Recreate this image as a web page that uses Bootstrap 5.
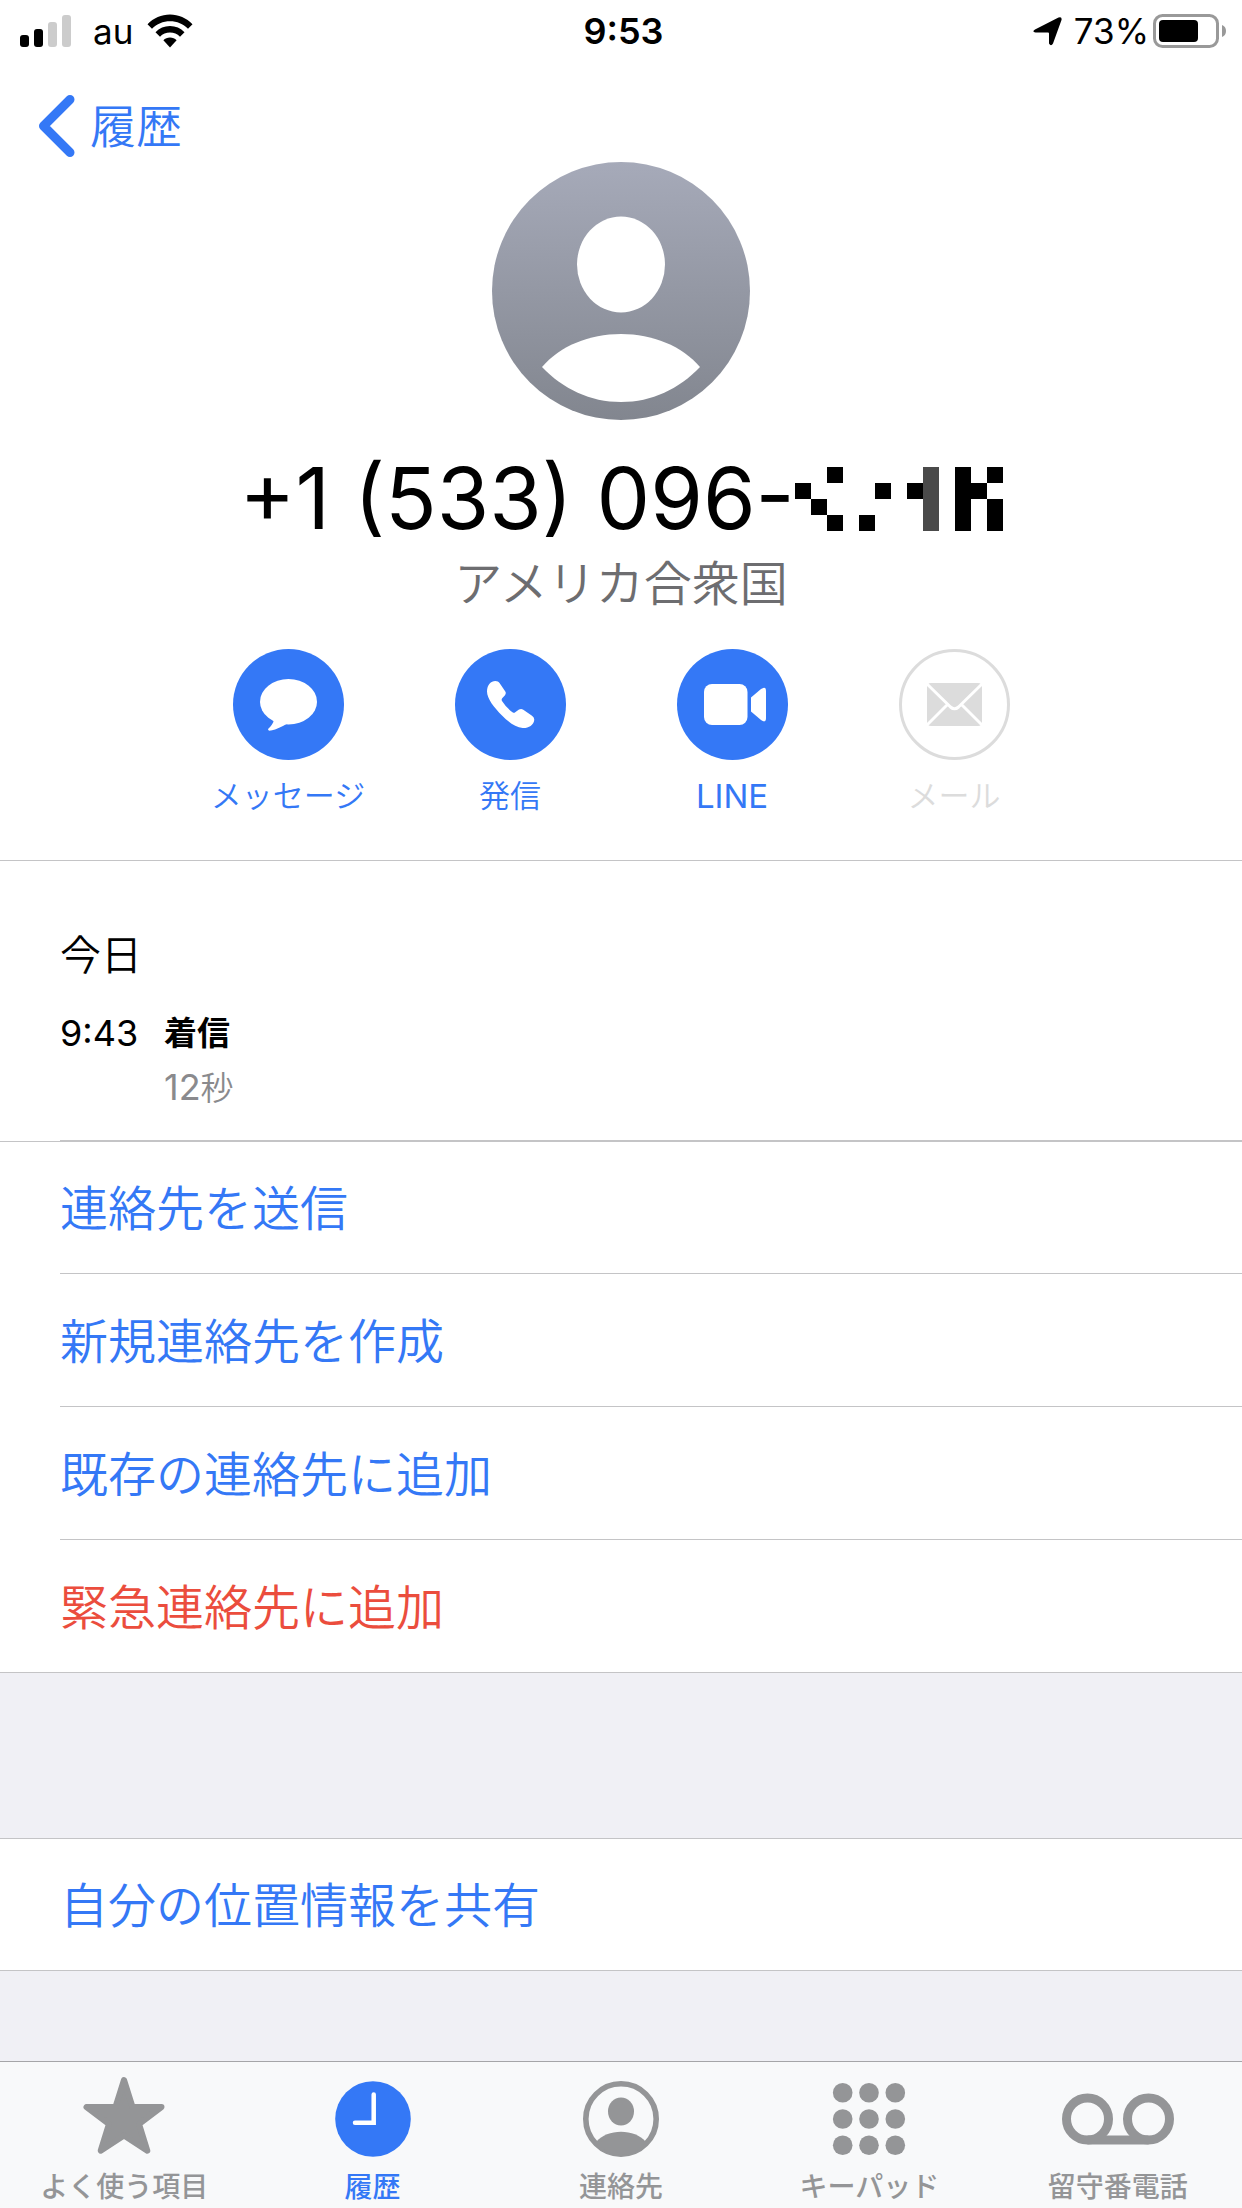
<!DOCTYPE html>
<html lang="ja">
<head>
<meta charset="utf-8">
<meta name="viewport" content="width=device-width, initial-scale=1">
<title>履歴</title>
<link href="https://cdn.jsdelivr.net/npm/bootstrap@5.3.0/dist/css/bootstrap.min.css" rel="stylesheet">
<style>
  :root { --ios-blue: #3478f6; --ios-line: #c4c4c6; --ios-gray: #949597; --ios-group: #f0f0f5; --thin: 350; }
  body { font-family: Inter, "Noto Sans CJK JP", sans-serif; color: #000; background: #fff; }
  svg { display: block; flex-shrink: 0; }
  .status-bar { height: 62px; padding: 0 15px 0 20px; font-size: 35px; line-height: 62px; }
  .status-bar .carrier { margin: 0 14px 0 22px; }
  .status-bar .clock { font-size: 36px; }
  .back-bar { padding: 32px 37px 4px; }
  .back-link { color: var(--ios-blue); font-size: 46px; font-weight: var(--thin); line-height: 64px; gap: 15px; }
  .number-line { font-size: 85px; line-height: 100px; font-weight: 400; margin-top: 29px; }
  .region-line { font-size: 48px; line-height: 64px; font-weight: var(--thin); color: #6d6d70; margin-top: 3px; }
  .quick-actions { padding: 33px 0 46px; }
  .quick-btn { width: 222px; color: var(--ios-blue); font-size: 31px; line-height: 36px; font-weight: var(--thin); gap: 18px; }
  .quick-btn:disabled { color: #dcdcdc; }
  .quick-btn .latin { font-size: 33px; font-weight: 400; }
  .hairline { border-color: var(--ios-line) !important; }
  .call-log { padding: 64px 0 0 60px; }
  .log-day { font-size: 41px; line-height: 60px; font-weight: var(--thin); margin-bottom: 21px; }
  .log-time { width: 104px; font-size: 36px; line-height: 54px; }
  .log-kind { font-size: 33px; line-height: 54px; font-weight: 700; }
  .log-length { font-size: 33px; line-height: 54px; font-weight: var(--thin); color: #8a8a8d; }
  .log-length .latin { font-size: 36px; font-weight: 400; }
  .log-body { padding-bottom: 25px; }
  .option-list { padding-left: 60px; }
  .option-list .list-group { margin-top: -1px; }
  .option-list .list-group-item { padding: 36px 0 32px; border-color: var(--ios-line); color: var(--ios-blue); font-size: 48px; line-height: 64px; font-weight: var(--thin); background: transparent; }
  .option-list .list-group-item.urgent { color: #eb4d3d; }
  .group-gap { height: 165px; background: var(--ios-group); }
  .group-rest { background: var(--ios-group); min-height: 90px; }
  .tab-strip { background: #f8f9fa; border-top: 1px solid #a5a5a8; padding: 14px 0 5px; }
  .tab-strip .nav-link { color: var(--ios-gray); padding: 0; font-size: 28px; line-height: 34px; font-weight: 500; gap: 10px; }
  .tab-strip .nav-link.active { color: var(--ios-blue); }
</style>
<script src="https://cdn.jsdelivr.net/npm/bootstrap@5.3.0/dist/js/bootstrap.bundle.min.js"></script>
</head>
<body>
<div class="d-flex flex-column min-vh-100">

  <header>
    <div class="status-bar d-flex">
      <div class="col d-flex align-items-center">
        <svg width="51" height="32" viewBox="0 0 51 32" aria-hidden="true">
          <rect x="0" y="20" width="9" height="12" rx="3"/><rect x="14" y="14" width="9" height="18" rx="3"/>
          <rect x="28" y="7" width="9" height="25" rx="3" fill="#ccc"/><rect x="42" y="0" width="9" height="32" rx="3" fill="#ccc"/>
        </svg>
        <span class="carrier">au</span>
        <svg width="46" height="34" viewBox="0 0 46 34" aria-hidden="true">
          <path d="M0.5 10.2C6.500 4 14.500.5 23 .5S39.500 4 45.500 10.200L41 14.700C36.200 9.900 29.900 7.300 23 7.300S9.800 9.900 5 14.700Z"/>
          <path d="M8.500 18.200C12.300 14.200 17.400 12 23 12S33.700 14.200 37.500 18.200L33 22.700C30.300 20 26.800 18.600 23 18.600S15.700 20 13 22.700Z"/>
          <path d="M16.400 26.200C18.100 24.500 20.400 23.500 23 23.500S27.900 24.500 29.600 26.200L23 33.500Z"/>
        </svg>
      </div>
      <div class="clock fw-semibold">9:53</div>
      <div class="col d-flex align-items-center justify-content-end">
        <svg width="29" height="29" viewBox="0 0 29 29" aria-hidden="true"><path d="M2 12.500 25.500.5Q29.200-.8 28.500 3L20 26.500Q18 30 16 26.500V16.500Q16 15.500 15 15.500H2.500Q-1.500 14.800 2 12.500Z"/></svg>
        <span class="ms-2 me-1 ps-1">73%</span>
        <svg width="74" height="34" viewBox="0 0 74 34" aria-hidden="true">
          <rect x="1.500" y="1.500" width="63" height="31" rx="8" fill="none" stroke="#999" stroke-width="3"/>
          <rect x="6" y="6" width="39" height="22" rx="4"/><path d="M69 11Q73 12.500 73 17T69 23Z" fill="#999"/>
        </svg>
      </div>
    </div>
    <nav class="back-bar d-flex" aria-label="戻る">
      <a href="#" class="back-link d-inline-flex align-items-center text-decoration-none">
        <svg width="38" height="64" viewBox="0 0 38 64" fill="none" stroke="currentColor" stroke-width="9" stroke-linecap="round" stroke-linejoin="round" aria-hidden="true"><path d="M33 5.500 6.500 32 33 58.500"/></svg>
        <span>履歴</span>
      </a>
    </nav>
  </header>

  <main class="flex-grow-1 d-flex flex-column">
    <section class="text-center border-bottom hairline">
      <svg class="mx-auto" width="258" height="258" viewBox="0 0 258 258" role="img" aria-label="連絡先の写真">
        <defs><linearGradient id="avatarShade" x1="0" y1="0" x2="0" y2="1"><stop offset="0" stop-color="#a6aab9"/><stop offset="1" stop-color="#82868f"/></linearGradient></defs>
        <circle cx="129" cy="129" r="129" fill="url(#avatarShade)"/>
        <ellipse cx="129" cy="102.500" rx="44" ry="48" fill="#fff"/>
        <path d="M50 205C68 184 97 172 129 172S190 184 208 205C187 227 160 240 129 240S71 227 50 205Z" fill="#fff"/>
      </svg>
      <h1 class="number-line d-flex justify-content-center align-items-center mb-0">
        <span>+1 (533) 096-</span>
        <svg width="208" height="64" viewBox="0 0 13 4" shape-rendering="crispEdges" aria-hidden="true">
          <path d="M2 0h1v1H2zM0 1h1v1H0zM1 2h1v1H1zM2 3h1v1H2zM4 3h1v1H4zM5 1h1v1H5zM7 1h1v1H7zM10 0h1v1h1v1h-1v2h-1zM12 0h1v1h-1zM12 2h1v2h-1z"/>
          <path d="M8 0h1v4H8z" fill="#4a4a4a"/>
        </svg>
      </h1>
      <p class="region-line mb-0">アメリカ合衆国</p>
      <div class="quick-actions d-flex justify-content-center">
        <button type="button" class="quick-btn btn border-0 p-0 d-flex flex-column align-items-center">
          <svg width="111" height="111" viewBox="0 0 111 111" aria-hidden="true"><circle cx="55.500" cy="55.500" r="55.500" fill="#3478f6"/><g fill="#fff"><ellipse cx="55.500" cy="52.700" rx="28.500" ry="22.700"/><path d="M41 71C40 75 37.500 77.500 35.500 79.500 34.300 81 35.800 82 38 81.500 43.500 80.500 49 77.500 53.500 75Z"/></g></svg>
          <span>メッセージ</span>
        </button>
        <button type="button" class="quick-btn btn border-0 p-0 d-flex flex-column align-items-center">
          <svg width="111" height="111" viewBox="0 0 111 111" aria-hidden="true"><circle cx="55.500" cy="55.500" r="55.500" fill="#3478f6"/><path fill="#fff" d="M32 42.500C32 36 36 32 40.300 32 42.300 32 43.700 32.800 44.700 34.300L50.300 42.500Q51.400 44.300 50 46.200L47.200 49.300Q46.200 50.500 47 52 51.500 59 57.500 63.300 59 64.300 60.200 63.300L64 60.500Q66.200 59.300 68.300 60.700L77 66.800Q79.600 68.700 79.200 71.200C78.500 76 73.500 79.300 67.700 79 60.500 78.600 53 72.500 47 66.500 39 58.500 32 49.500 32 42.500Z"/></svg>
          <span>発信</span>
        </button>
        <button type="button" class="quick-btn btn border-0 p-0 d-flex flex-column align-items-center">
          <svg width="111" height="111" viewBox="0 0 111 111" aria-hidden="true"><circle cx="55.500" cy="55.500" r="55.500" fill="#3478f6"/><g fill="#fff"><rect x="27" y="35" width="43.500" height="41" rx="8"/><path d="M74 48.500 84 40Q89 36.500 89 42V69Q89 74.500 84 71L74 62.500Z"/></g></svg>
          <span class="latin">LINE</span>
        </button>
        <button type="button" class="quick-btn btn border-0 p-0 d-flex flex-column align-items-center opacity-100" disabled>
          <svg width="111" height="111" viewBox="0 0 111 111" aria-hidden="true"><circle cx="55.500" cy="55.500" r="54" fill="#fff" stroke="#dcdcdc" stroke-width="3"/><rect x="28" y="34" width="55" height="43" rx="4" fill="#dcdcdc"/><path d="M27 34 51.500 58Q55.500 61.500 59.500 58L84 34M48.500 55.500 27 77M62.500 55.500 84 77" fill="none" stroke="#fff" stroke-width="3"/></svg>
          <span>メール</span>
        </button>
      </div>
    </section>

    <section class="call-log">
      <h2 class="log-day">今日</h2>
      <div class="log-body d-flex border-bottom hairline">
        <div class="log-time">9:43</div>
        <div>
          <div class="log-kind">着信</div>
          <div class="log-length"><span class="latin">12</span>秒</div>
        </div>
      </div>
    </section>

    <section class="option-list border-top border-bottom hairline">
      <div class="list-group list-group-flush">
        <button type="button" class="list-group-item list-group-item-action">連絡先を送信</button>
        <button type="button" class="list-group-item list-group-item-action">新規連絡先を作成</button>
        <button type="button" class="list-group-item list-group-item-action">既存の連絡先に追加</button>
        <button type="button" class="list-group-item list-group-item-action urgent">緊急連絡先に追加</button>
      </div>
    </section>
    <div class="group-gap"></div>
    <section class="option-list border-top border-bottom hairline">
      <div class="list-group list-group-flush">
        <button type="button" class="list-group-item list-group-item-action">自分の位置情報を共有</button>
      </div>
    </section>
    <div class="group-rest flex-grow-1"></div>
  </main>

  <nav class="tab-strip nav flex-nowrap text-center sticky-bottom" aria-label="タブ">
    <div class="nav-item col"><a href="#" class="nav-link d-flex flex-column align-items-center">
      <svg width="84" height="84" viewBox="12 0 84 84" fill="currentColor" stroke="currentColor" stroke-width="6" stroke-linejoin="round" aria-hidden="true"><path d="M54 4 62.500 31H91.500L69 48 77.300 74.700 54 59.500 30.700 74.700 39 48 16.500 31H45.500Z"/></svg>
      <span>よく使う項目</span></a></div>
    <div class="nav-item col"><a href="#" class="nav-link active d-flex flex-column align-items-center" aria-current="page">
      <svg width="84" height="84" viewBox="0 0 84 84" aria-hidden="true"><circle cx="42" cy="43" r="37.800" fill="currentColor"/><path d="M42.700 18.500V46.700H24" fill="none" stroke="#fff" stroke-width="4.500" stroke-linecap="round"/></svg>
      <span>履歴</span></a></div>
    <div class="nav-item col"><a href="#" class="nav-link d-flex flex-column align-items-center">
      <svg width="84" height="84" viewBox="0 0 84 84" fill="currentColor" aria-hidden="true"><circle cx="42" cy="43" r="35.200" fill="none" stroke="currentColor" stroke-width="5.600"/><ellipse cx="42" cy="35.500" rx="13" ry="14"/><path d="M17 66C23 59 32 55.700 42 55.700S61 59 67 66C60 74 52 79 42 79S24 74 17 66Z"/></svg>
      <span>連絡先</span></a></div>
    <div class="nav-item col"><a href="#" class="nav-link d-flex flex-column align-items-center">
      <svg width="84" height="84" viewBox="0 0 84 84" fill="currentColor" aria-hidden="true"><circle cx="15.700" cy="16.800" r="9.800"/><circle cx="42" cy="16.800" r="9.800"/><circle cx="68.300" cy="16.800" r="9.800"/><circle cx="15.700" cy="43" r="9.800"/><circle cx="42" cy="43" r="9.800"/><circle cx="68.300" cy="43" r="9.800"/><circle cx="15.700" cy="69.200" r="9.800"/><circle cx="42" cy="69.200" r="9.800"/><circle cx="68.300" cy="69.200" r="9.800"/></svg>
      <span>キーパッド</span></a></div>
    <div class="nav-item col"><a href="#" class="nav-link d-flex flex-column align-items-center">
      <svg width="112" height="84" viewBox="0 0 112 84" fill="none" stroke="currentColor" stroke-width="9" aria-hidden="true"><circle cx="25.500" cy="43" r="21"/><circle cx="86.500" cy="43" r="21"/><path d="M25.500 64H86.500"/></svg>
      <span>留守番電話</span></a></div>
  </nav>
</div>
</body>
</html>
